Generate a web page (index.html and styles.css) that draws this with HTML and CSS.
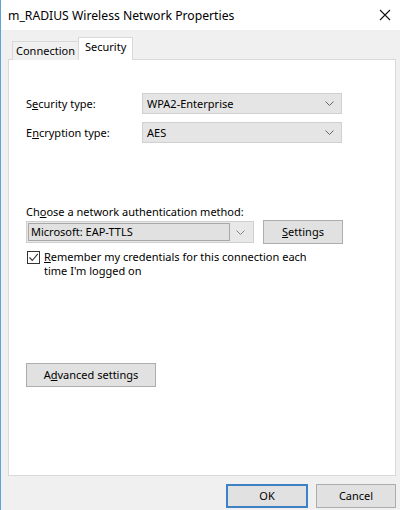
FILE: index.html
```html
<!DOCTYPE html>
<html>
<head>
<meta charset="utf-8">
<link rel="stylesheet" href="styles.css">
</head>
<body>
<div class="window">
  <div class="titlebar">
    <span class="title">m_RADIUS Wireless Network Properties</span>
    <svg class="close" width="12" height="12" viewBox="0 0 12 12"><path d="M1 1 L11 11 M11 1 L1 11" stroke="#111" stroke-width="1.1" fill="none"/></svg>
  </div>
  <div class="client">
    <div class="tabs">
      <div class="tab">Connection</div>
      <div class="tab active">Security</div>
    </div>
    <div class="panel">
      <div class="grid">
        <label class="lbl">S<u>e</u>curity type:</label>
        <div class="select"><span>WPA2-Enterprise</span><svg class="chev" width="9" height="5" viewBox="0 0 9 5"><path d="M0.5 0.5 L4.5 4.5 L8.5 0.5" stroke="#666" fill="none"/></svg></div>
        <label class="lbl">E<u>n</u>cryption type:</label>
        <div class="select"><span>AES</span><svg class="chev" width="9" height="5" viewBox="0 0 9 5"><path d="M0.5 0.5 L4.5 4.5 L8.5 0.5" stroke="#666" fill="none"/></svg></div>
      </div>
      <div class="auth-label">Ch<u>o</u>ose a network authentication method:</div>
      <div class="auth-row">
        <div class="combo">
          <div class="combo-text">Microsoft: EAP-TTLS</div>
          <svg class="chev" width="9" height="5" viewBox="0 0 9 5"><path d="M0.5 0.5 L4.5 4.5 L8.5 0.5" stroke="#888" fill="none"/></svg>
        </div>
        <div class="btn settings"><span><u>S</u>ettings</span></div>
      </div>
      <div class="check-row">
        <div class="checkbox"><svg width="11" height="11" viewBox="0 0 11 11"><path d="M1.5 5.5 L4.3 8.5 L9.8 1.8" stroke="#333" stroke-width="1.1" fill="none"/></svg></div>
        <div class="check-text"><u>R</u>emember my credentials for this connection each<br>time I'm logged on</div>
      </div>
      <div class="btn advanced"><span>A<u>d</u>vanced settings</span></div>
    </div>
    <div class="footer">
      <div class="btn ok">OK</div>
      <div class="btn cancel">Cancel</div>
    </div>
  </div>
</div>
</body>
</html>
```
FILE: styles.css
```css
html, body {
  margin: 0;
  padding: 0;
}
body {
  width: 400px;
  height: 510px;
  overflow: hidden;
  font-family: "Noto Sans", "Open Sans", sans-serif;
  font-size: 11px;
  color: #000;
}
u { text-decoration: underline; text-underline-offset: 1px; }
.window {
  width: 400px;
  height: 510px;
  box-sizing: border-box;
  border-left: 1px solid #5ea3d6;
  background: #f0f0f0;
  display: flex;
  flex-direction: column;
}
.titlebar {
  height: 30px;
  background: #fff;
  display: flex;
  align-items: center;
  justify-content: space-between;
  padding: 0 8px 0 7px;
  flex: none;
}
.title {
  font-size: 12.2px;
  color: #000;
}
.close { margin-right: 1px; }
.client {
  flex: 1;
  display: flex;
  flex-direction: column;
  padding: 7px 4px 0 7px;
}
.tabs {
  display: flex;
  align-items: flex-end;
  height: 22px;
  padding-left: 4px;
  position: relative;
  z-index: 1;
}
.tab {
  height: 18px;
  line-height: 18px;
  padding: 0 3px 0 3px;
  border: 1px solid #d9d9d9;
  border-bottom: none;
  border-right: none;
  background: #f0f0f0;
  margin-bottom: -1px;
}
.tab.active {
  height: 22px;
  line-height: 18px;
  background: #fff;
  border-right: 1px solid #d9d9d9;
  padding: 0 6px 0 6px;
  margin-bottom: -1px;
}
.panel {
  height: 417px;
  box-sizing: border-box;
  background: #fff;
  border: 1px solid #d9d9d9;
  padding: 33px 0 0 17px;
  display: flex;
  flex-direction: column;
  align-items: flex-start;
}
.grid {
  display: grid;
  grid-template-columns: 116px 200px;
  row-gap: 8px;
  align-items: center;
}
.lbl { line-height: 21px; }
.select {
  height: 21px;
  box-sizing: border-box;
  background: #e5e5e5;
  border: 1px solid #d0d0d0;
  display: flex;
  align-items: center;
  justify-content: space-between;
  padding: 0 7px 0 4px;
}
.chev { display: block; }
.auth-label {
  margin-top: 61px;
  line-height: 16px;
}
.auth-row {
  display: flex;
  align-items: center;
  gap: 9px;
}
.combo {
  width: 228px;
  height: 22px;
  box-sizing: border-box;
  border: 1px solid #cfcfcf;
  background: #e8e8e8;
  display: flex;
  align-items: center;
  padding: 0 8px 0 1px;
  gap: 6px;
}
.combo-text {
  flex: 1;
  height: 18px;
  box-sizing: border-box;
  border: 1px solid #a8a8a8;
  background: #e1e1e1;
  line-height: 16px;
  padding-left: 2px;
}
.btn {
  height: 24px;
  box-sizing: border-box;
  border: 1px solid #adadad;
  background: #e1e1e1;
  display: flex;
  align-items: center;
  justify-content: center;
  line-height: 16px;
}
.settings { width: 80px; }
.check-row {
  display: flex;
  align-items: flex-start;
  margin-top: 6px;
  margin-left: 1px;
  gap: 4px;
}
.checkbox {
  width: 13px;
  height: 13px;
  box-sizing: border-box;
  border: 1px solid #333;
  background: #fff;
  display: flex;
  align-items: center;
  justify-content: center;
  margin-top: 1px;
}
.check-text { line-height: 14px; }
.advanced {
  width: 130px;
  margin-top: 85px;
}
.footer {
  display: flex;
  justify-content: flex-end;
  gap: 8px;
  padding-top: 8px;
}
.ok {
  width: 82px;
  border: 1px solid #3c82c4;
  box-shadow: inset 0 0 0 1px #3c82c4;
}
.cancel { width: 80px; }
```
